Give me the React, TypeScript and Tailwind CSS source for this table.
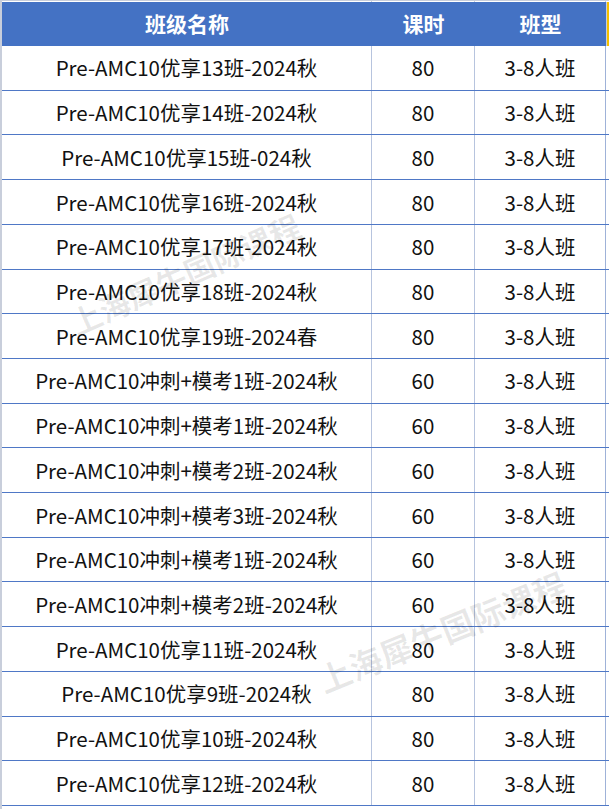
const rows: [string, string][] = [
  ['Pre-AMC10优享13班-2024秋', '80'],
  ['Pre-AMC10优享14班-2024秋', '80'],
  ['Pre-AMC10优享15班-024秋', '80'],
  ['Pre-AMC10优享16班-2024秋', '80'],
  ['Pre-AMC10优享17班-2024秋', '80'],
  ['Pre-AMC10优享18班-2024秋', '80'],
  ['Pre-AMC10优享19班-2024春', '80'],
  ['Pre-AMC10冲刺+模考1班-2024秋', '60'],
  ['Pre-AMC10冲刺+模考1班-2024秋', '60'],
  ['Pre-AMC10冲刺+模考2班-2024秋', '60'],
  ['Pre-AMC10冲刺+模考3班-2024秋', '60'],
  ['Pre-AMC10冲刺+模考1班-2024秋', '60'],
  ['Pre-AMC10冲刺+模考2班-2024秋', '60'],
  ['Pre-AMC10优享11班-2024秋', '80'],
  ['Pre-AMC10优享9班-2024秋', '80'],
  ['Pre-AMC10优享10班-2024秋', '80'],
  ['Pre-AMC10优享12班-2024秋', '80'],
];

const font = { fontFamily: '"Noto Sans CJK SC", "Liberation Sans", sans-serif' };

export default function App() {
  return (
    <div
      className="relative w-[609px] h-[809px] overflow-hidden bg-white border-l-2 border-[#c8cedb]"
      style={font}
    >
      {/* top strip with column guides */}
      <div className="grid grid-cols-[370px_103px_131px_1fr] h-[2px] border-t border-[#c8cedb]">
        <div className="border-r border-[#c8cedb]" />
        <div className="border-r border-[#c8cedb]" />
        <div className="border-r border-[#c8cedb]" />
        <div />
      </div>

      {/* header */}
      <div className="grid grid-cols-[370px_103px_131px_1fr] h-[44px] text-white font-bold text-[21px]">
        <div className="bg-[#4472c4] flex items-center justify-center">班级名称</div>
        <div className="bg-[#4472c4] flex items-center justify-center">课时</div>
        <div className="bg-[#4472c4] flex items-center justify-center">班型</div>
        <div className="flex">
          <div className="w-px bg-[#c8cedb]" />
          <div className="flex-1 bg-[#f5c000]" />
        </div>
      </div>

      {/* body */}
      <div className="grid grid-rows-[repeat(17,1fr)] h-[760px] text-[20.5px] text-[#111]">
        {rows.map(([name, hours], i) => (
          <div
            key={i}
            className="grid grid-cols-[370px_103px_131px_1fr] border-b border-[#4f78c6]"
          >
            <div className="flex items-center justify-center border-r border-[#b7c4de]">{name}</div>
            <div className="flex items-center justify-center border-r border-[#b7c4de]">{hours}</div>
            <div className="flex items-center justify-center border-r border-[#9fb2d8]">3-8人班</div>
            <div />
          </div>
        ))}
      </div>

      {/* watermarks */}
      <div className="absolute left-[183px] top-[274px] -translate-x-1/2 -translate-y-1/2 -rotate-[24deg] whitespace-nowrap text-[31px] font-bold text-black/[0.09] pointer-events-none">
        上海犀牛国际课程
      </div>
      <div className="absolute left-[440px] top-[632px] -translate-x-1/2 -translate-y-1/2 -rotate-[22deg] whitespace-nowrap text-[33px] font-bold text-black/[0.09] pointer-events-none">
        上海犀牛国际课程
      </div>
    </div>
  );
}
